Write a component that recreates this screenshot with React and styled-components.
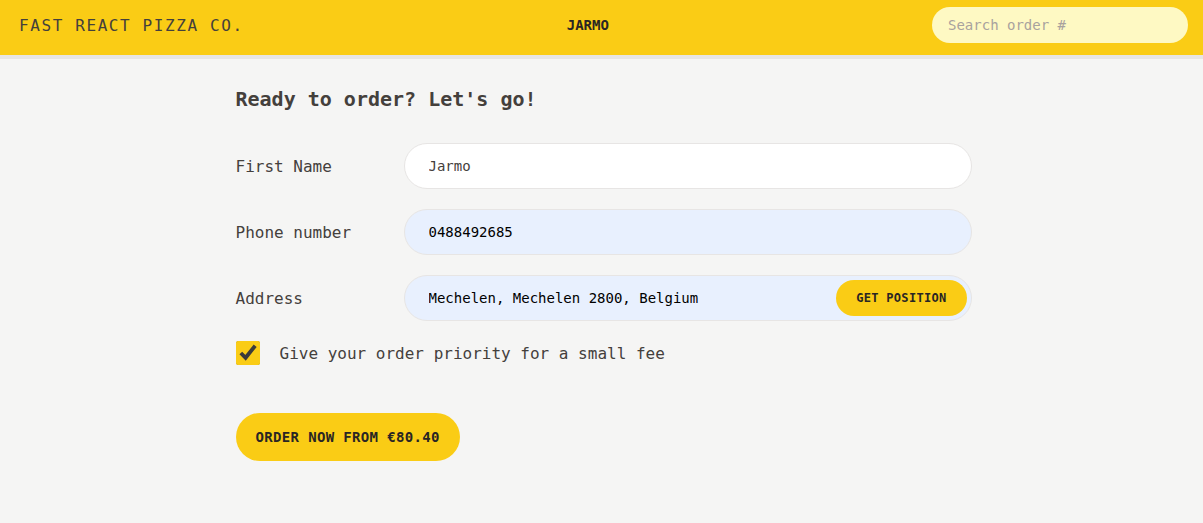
import styled, { createGlobalStyle } from "styled-components";

const GlobalStyle = createGlobalStyle`
  * { box-sizing: border-box; }
  body {
    margin: 0;
    font-family: "DejaVu Sans Mono", "Liberation Mono", monospace;
    background: #f5f5f4;
    color: #44403c;
  }
`;

const Page = styled.div`
  min-height: 100vh;
  background: #f5f5f4;
`;

const Header = styled.header`
  display: flex;
  align-items: center;
  justify-content: space-between;
  height: 59px;
  padding: 7px 15px 12px 19px;
  background: #facc15;
  border-bottom: 4px solid #e7e5e4;
`;

const Logo = styled.a`
  font-size: 16px;
  letter-spacing: 0.1em;
  text-transform: uppercase;
  color: #44403c;
  text-decoration: none;
`;

const Username = styled.div`
  font-size: 14px;
  font-weight: 700;
  text-transform: uppercase;
  color: #292524;
`;

const Search = styled.input`
  width: 256px;
  height: 36px;
  border: none;
  border-radius: 999px;
  padding: 0 16px;
  background: #fef9c3;
  font-family: inherit;
  font-size: 14px;
  color: #44403c;
  outline: none;

  &::placeholder {
    color: #a8a29e;
  }
`;

const Main = styled.main`
  max-width: 768px;
  margin: 0 auto;
  padding: 24px 14px 24px 18px;
`;

const Title = styled.h2`
  margin: 2px 0 30px;
  font-size: 20px;
  line-height: 28px;
  font-weight: 700;
  color: #44403c;
`;

const Row = styled.div`
  display: flex;
  align-items: center;
  gap: 8px;
  margin-bottom: 20px;
`;

const Label = styled.label`
  flex: 0 0 160px;
  font-size: 16px;
  color: #44403c;
`;

const Field = styled.div`
  position: relative;
  flex: 1;
`;

const Input = styled.input`
  width: 100%;
  height: 46px;
  border: 1px solid #e7e5e4;
  border-radius: 999px;
  padding: 0 24px;
  background: ${(p) => (p.$filled ? "#e8f0fe" : "#ffffff")};
  color: ${(p) => (p.$filled ? "#000000" : "#44403c")};
  font-family: inherit;
  font-size: 14px;
  outline: none;
`;

const Button = styled.button`
  display: inline-block;
  border: none;
  border-radius: 999px;
  background: #facc15;
  color: #292524;
  font-family: inherit;
  font-weight: 700;
  text-transform: uppercase;
  letter-spacing: 0.025em;
  cursor: pointer;
  font-size: ${(p) => (p.$small ? "12px" : "14px")};
  line-height: ${(p) => (p.$small ? "16px" : "20px")};
  padding: ${(p) => (p.$small ? "10px 20px" : "14px 20px")};
`;

const PositionButton = styled(Button)`
  position: absolute;
  top: 5px;
  right: 5px;
`;

const CheckRow = styled.div`
  display: flex;
  align-items: center;
  gap: 20px;
  margin-bottom: 48px;
`;

const Checkbox = styled.input`
  width: 24px;
  height: 24px;
  margin: 0;
  accent-color: #facc15;
`;

const CheckLabel = styled.label`
  font-size: 16px;
  font-weight: 500;
  color: #44403c;
`;

export default function App() {
  return (
    <Page>
      <GlobalStyle />
      <Header>
        <Logo href="#">Fast React Pizza Co.</Logo>
        <Username>Jarmo</Username>
        <form onSubmit={(e) => e.preventDefault()}>
          <Search placeholder="Search order #" />
        </form>
      </Header>
      <Main>
        <Title>Ready to order? Let's go!</Title>
        <Row>
          <Label>First Name</Label>
          <Field>
            <Input defaultValue="Jarmo" />
          </Field>
        </Row>
        <Row>
          <Label>Phone number</Label>
          <Field>
            <Input $filled defaultValue="0488492685" />
          </Field>
        </Row>
        <Row>
          <Label>Address</Label>
          <Field>
            <Input $filled defaultValue="Mechelen, Mechelen 2800, Belgium" />
            <PositionButton $small>Get position</PositionButton>
          </Field>
        </Row>
        <CheckRow>
          <Checkbox type="checkbox" id="priority" defaultChecked />
          <CheckLabel htmlFor="priority">
            Give your order priority for a small fee
          </CheckLabel>
        </CheckRow>
        <Button>Order now from €80.40</Button>
      </Main>
    </Page>
  );
}
